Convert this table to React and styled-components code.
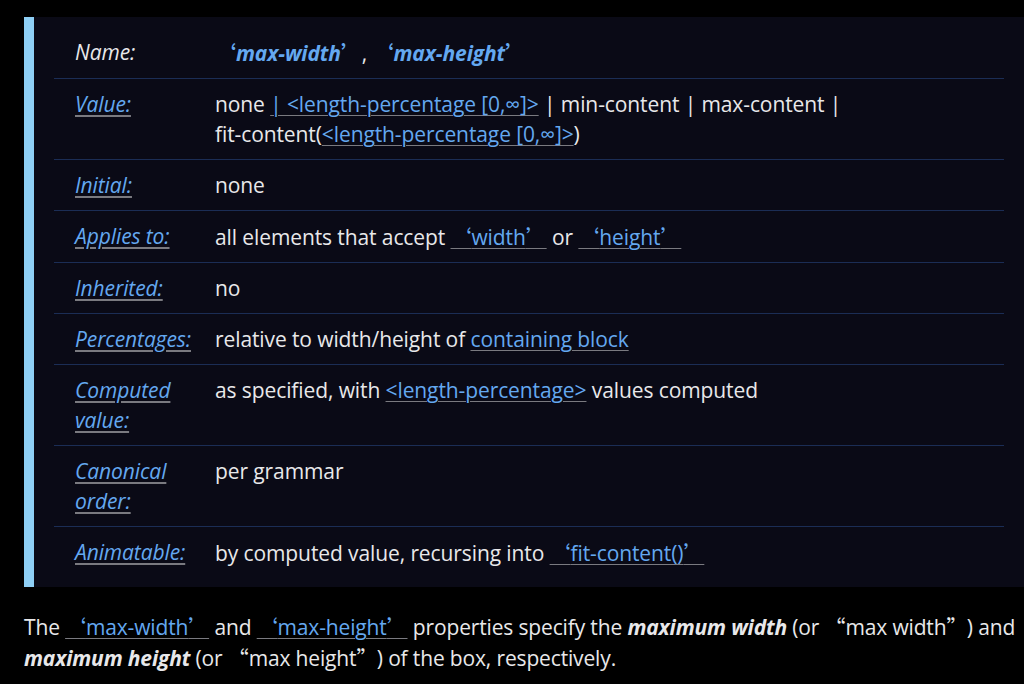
import React from "react";
import styled, { createGlobalStyle } from "styled-components";

const GlobalStyle = createGlobalStyle`
  html, body {
    margin: 0;
    padding: 0;
    background: #000;
  }
  body {
    font-family: "Open Sans", "Noto Sans", sans-serif;
    color: #e8e8ea;
  }
`;

const Page = styled.div`
  width: 1024px;
  height: 684px;
  overflow: hidden;
  padding: 17px 0 0 24px;
  box-sizing: border-box;
  background: #000;
`;

const DefBox = styled.div`
  background: #0a0a16;
  border-left: 10px solid #8ecff5;
  padding: 10px 20px 9px 20px;
`;

const Row = styled.div`
  display: grid;
  grid-template-columns: 140px 1fr;
  padding: 10px 0 10px 21px;
  border-top: 1px solid #1b2d55;
  font-size: 21px;
  line-height: 30px;
  letter-spacing: -0.1px;

  &:first-child {
    border-top: none;
  }
`;

const Label = styled.div`
  font-style: italic;
  color: ${(p) => (p.$plain ? "#e8e8ea" : "#64a8f0")};
  white-space: nowrap;

  span {
    text-decoration: ${(p) => (p.$plain ? "none" : "underline")};
    text-decoration-color: #7a7a80;
    text-underline-offset: 3px;
  }
`;

const Value = styled.div`
  color: #e8e8ea;
  white-space: nowrap;
`;

const Link = styled.span`
  color: #64a8f0;
  text-decoration: underline;
  text-decoration-color: #7a7a80;
  text-decoration-thickness: 1px;
  text-underline-offset: 3px;
`;

const PropName = styled.span`
  color: #64a8f0;
  font-weight: 700;
  font-style: italic;
`;

const Q = styled.span`
  font-family: "Noto Sans CJK SC", sans-serif;
  font-style: normal;
  margin-right: ${(p) => p.$gap || 0}px;
`;

const Para = styled.p`
  margin: 24px 0 0 0;
  font-size: 21px;
  line-height: 30px;
  letter-spacing: -0.15px;
  color: #e8e8ea;
  white-space: nowrap;
`;

const Term = styled.b`
  font-weight: 700;
  font-style: italic;
`;

const quoted = (t) => (
  <>
    <Q>‘</Q>
    {t}
    <Q>’</Q>
  </>
);

const rows = [
  {
    label: "Value:",
    value: (
      <>
        none <Link>| &lt;length-percentage [0,∞]&gt;</Link> | min-content |
        max-content |<br />
        fit-content(<Link>&lt;length-percentage [0,∞]&gt;</Link>)
      </>
    ),
  },
  { label: "Initial:", value: "none" },
  {
    label: "Applies to:",
    value: (
      <>
        all elements that accept <Link>{quoted("width")}</Link> or{" "}
        <Link>{quoted("height")}</Link>
      </>
    ),
  },
  { label: "Inherited:", value: "no" },
  {
    label: "Percentages:",
    value: (
      <>
        relative to width/height of <Link>containing block</Link>
      </>
    ),
  },
  {
    label: ["Computed", "value:"],
    value: (
      <>
        as specified, with <Link>&lt;length-percentage&gt;</Link> values
        computed
      </>
    ),
  },
  { label: ["Canonical", "order:"], value: "per grammar" },
  {
    label: "Animatable:",
    value: (
      <>
        by computed value, recursing into <Link>{quoted("fit-content()")}</Link>
      </>
    ),
  },
];

function renderLabel(label) {
  if (Array.isArray(label)) {
    return (
      <>
        <span>{label[0]}</span>
        <br />
        <span>{label[1]}</span>
      </>
    );
  }
  return <span>{label}</span>;
}

export default function App() {
  return (
    <>
      <GlobalStyle />
      <Page>
        <DefBox>
          <Row>
            <Label $plain>
              <span>Name:</span>
            </Label>
            <Value>
              <PropName>{quoted("max-width")}</PropName>,{" "}
              <PropName>{quoted("max-height")}</PropName>
            </Value>
          </Row>
          {rows.map((r, i) => (
            <Row key={i}>
              <Label>{renderLabel(r.label)}</Label>
              <Value>{r.value}</Value>
            </Row>
          ))}
        </DefBox>
        <Para>
          The <Link>{quoted("max-width")}</Link> and{" "}
          <Link>{quoted("max-height")}</Link> properties specify the{" "}
          <Term>maximum width</Term> (or <Q>“</Q>max width<Q $gap={10}>”</Q>)
          and
          <br />
          <Term>maximum height</Term> (or <Q>“</Q>max height<Q $gap={10}>”</Q>)
          of the box, respectively.
        </Para>
      </Page>
    </>
  );
}
